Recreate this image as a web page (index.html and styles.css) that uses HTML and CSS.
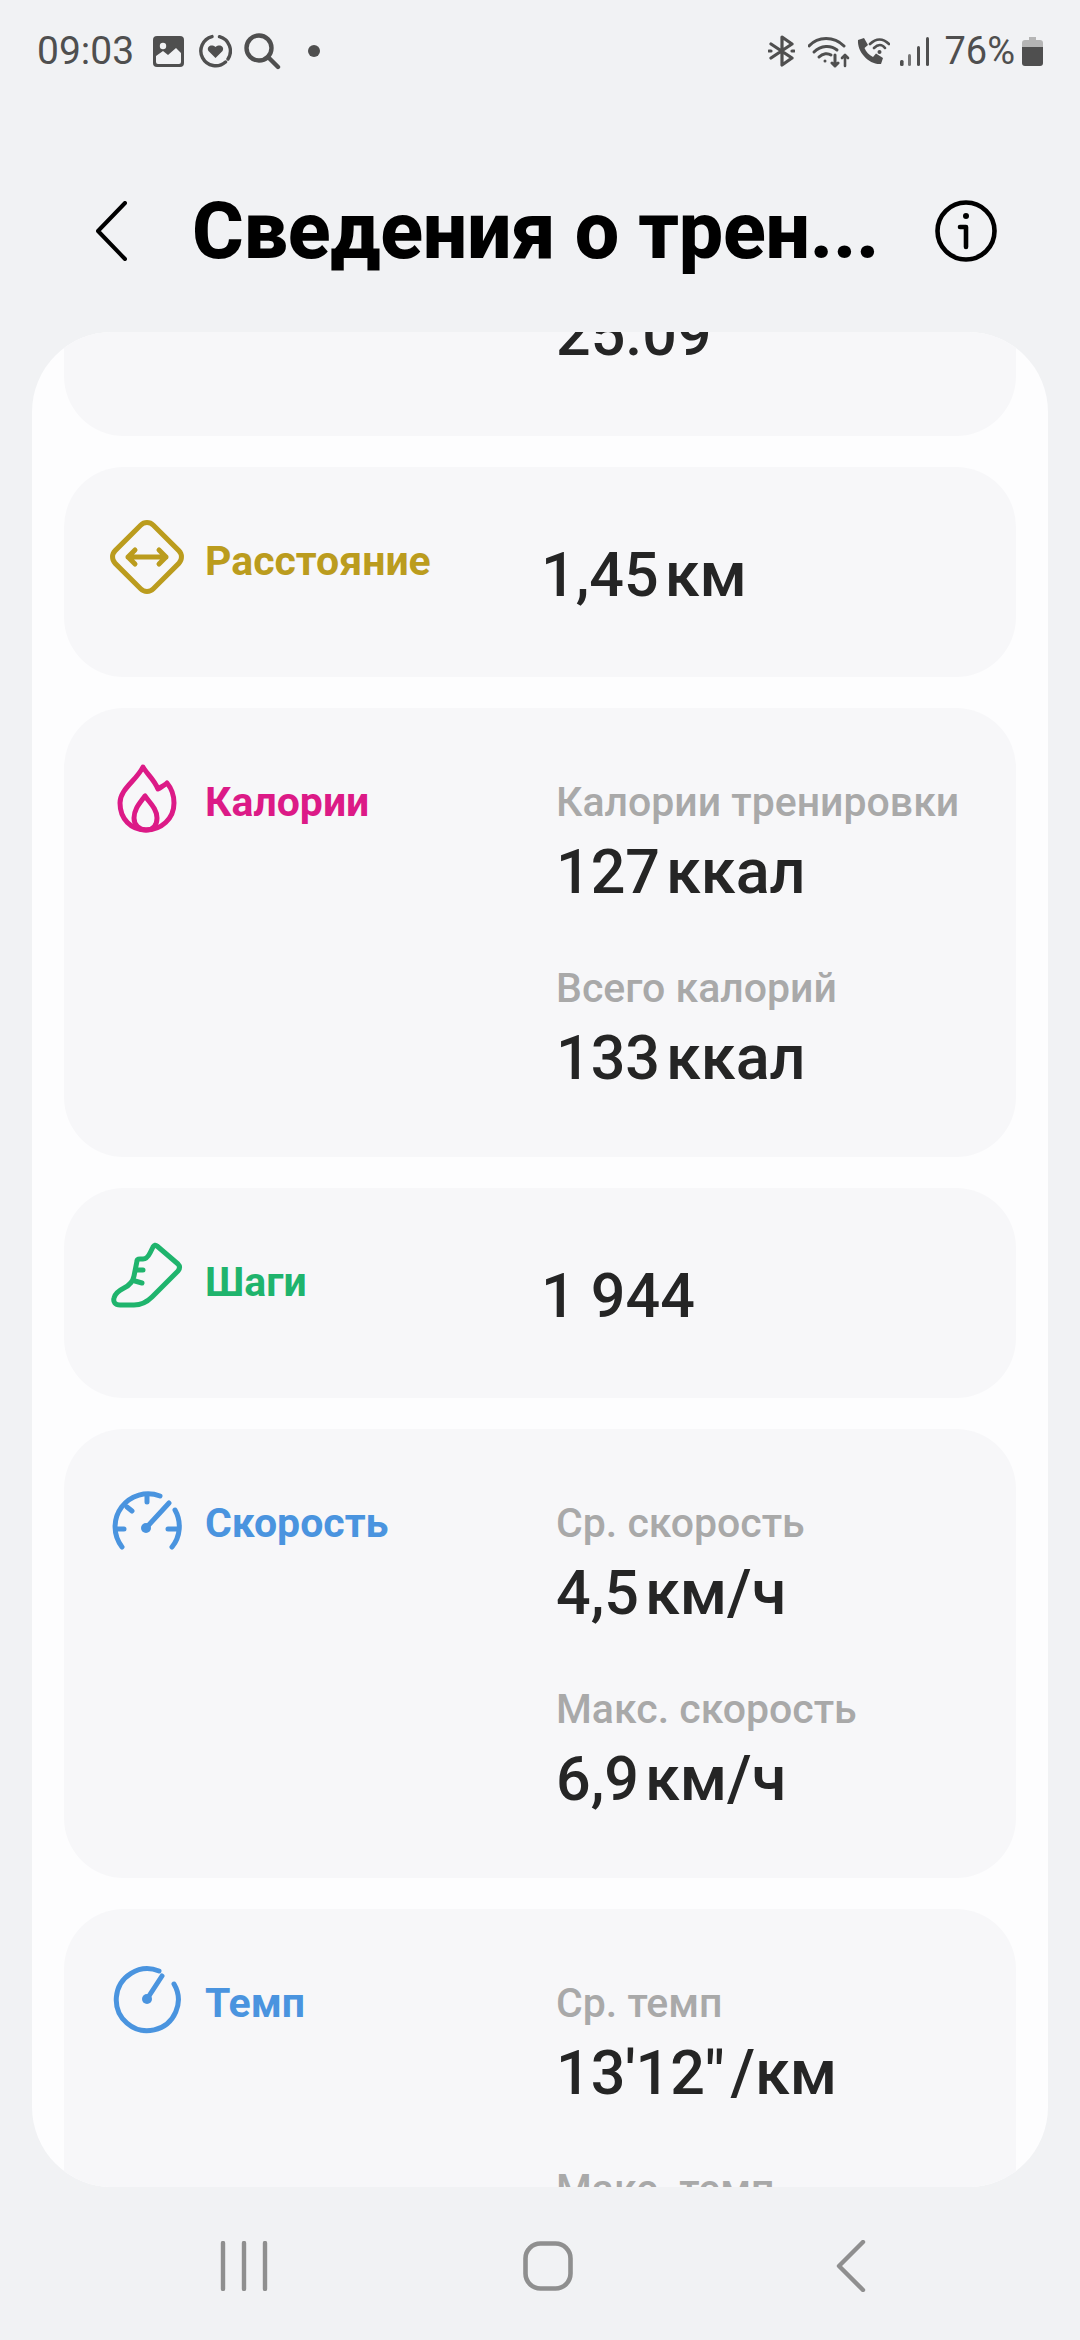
FILE: index.html
```html
<!DOCTYPE html>
<html lang="ru">
<head>
    <meta charset="UTF-8">
    <meta name="viewport" content="width=device-width, initial-scale=1.0">
    <title>Сведения о тренировке</title>
    <link rel="stylesheet" href="styles.css">
</head>
<body>
    <!-- Status bar -->
    <div class="status-bar">
        <div class="status-group">
            <span class="status-time">09:03</span>
            <svg class="status-image" width="31" height="31" viewBox="0 0 31 31">
                <rect width="31" height="31" rx="4" fill="#4f4f4f"/>
                <circle cx="10" cy="10" r="3.2" fill="#f1f2f4"/>
                <path d="M3 26 V20 L10 15 L15 19 L23 12 L28 17 V26 Q28 28 26 28 H5 Q3 28 3 26 Z" fill="#f1f2f4"/>
            </svg>
            <svg class="status-ring" width="33" height="34" viewBox="0 0 33 34" fill="none">
                <path d="M13 2.6 A14.8 14.8 0 1 0 26.5 28 M29 25 A14.8 14.8 0 0 0 20.5 2.7" stroke="#4f4f4f" stroke-width="3.4" stroke-linecap="round"/>
                <path d="M16.5 24 L9.5 17 C7 13 12 9.5 16.5 13 C21 9.5 26 13 23.5 17 Z" fill="#4f4f4f"/>
            </svg>
            <svg class="status-search" width="37" height="37" viewBox="0 0 37 37" fill="none" stroke="#4f4f4f" stroke-width="4.4" stroke-linecap="round">
                <circle cx="15" cy="15" r="12.5"/>
                <path d="M24 24 L34 34"/>
            </svg>
            <span class="status-dot"></span>
        </div>
        <div class="status-group">
            <svg class="status-bt" width="27" height="32" viewBox="0 0 27 32" fill="none" stroke="#4f4f4f" stroke-width="3.2" stroke-linecap="round" stroke-linejoin="round">
                <path d="M3 9 L24 23 L14 30 V2 L24 9 L3 23"/>
                <path d="M1 16 H3 M24 16 H26"/>
            </svg>
            <svg class="status-wifi" width="42" height="33" viewBox="0 0 42 33" fill="none" stroke="#4f4f4f" stroke-width="3" stroke-linecap="round" stroke-linejoin="round">
                <path d="M1 11 C10 1 26 1 36 11"/>
                <path d="M6 17 C13 10 23 10 29 15"/>
                <path d="M11 22 C15 18 20 18 23 20"/>
                <circle cx="17" cy="26" r="1.5" fill="#4f4f4f" stroke="none"/>
                <path d="M27 20 V31 M24 28 L27 31 L30 28"/>
                <path d="M37 31 V20 M34 23 L37 20 L40 23" stroke-width="2.6"/>
            </svg>
            <svg class="status-call" width="34" height="29" viewBox="0 0 34 29" fill="none">
                <path d="M2 3 L8 1 L12 8 L8.5 11 C10 15 13 18 17 20 L20 16.5 L27 21 L25 27 C13 28 1 15 2 3 Z" fill="#4f4f4f"/>
                <path d="M14 7 C20 1 27 1 33 7 M18 11 C22 7 26 7 29 11" stroke="#4f4f4f" stroke-width="2.6" stroke-linecap="round"/>
                <circle cx="23.5" cy="15" r="2" fill="#4f4f4f"/>
            </svg>
            <svg class="status-signal" width="29" height="29" viewBox="0 0 29 29" fill="#4f4f4f">
                <rect x="0" y="23" width="3.6" height="6" rx="1.5"/>
                <rect x="8" y="17" width="3" height="12" rx="1.5" fill="#777"/>
                <rect x="17" y="9" width="3" height="20" rx="1.5"/>
                <rect x="26" y="0" width="3" height="29" rx="1.5"/>
            </svg>
            <span class="status-battery-text">76%</span>
            <svg class="status-battery" width="21" height="29" viewBox="0 0 21 29">
                <path d="M7 0 H14 V3 H18 Q21 3 21 6 V10 H0 V6 Q0 3 3 3 H7 Z" fill="#b5b5b5"/>
                <path d="M0 10 H21 V26 Q21 29 18 29 H3 Q0 29 0 26 Z" fill="#4f4f4f"/>
            </svg>
        </div>
    </div>

    <!-- Title row -->
    <div class="app-header">
        <svg class="header-back" width="31" height="60" viewBox="0 0 31 60" fill="none" stroke="#000" stroke-width="4" stroke-linecap="round" stroke-linejoin="round">
            <path d="M29 2 L2 30 L29 58"/>
        </svg>
        <h1 class="header-title">Сведения о трен...</h1>
        <svg class="header-info" width="62" height="62" viewBox="0 0 62 62" fill="none" stroke="#000" stroke-width="4.6" stroke-linecap="round" stroke-linejoin="round">
            <circle cx="31" cy="31" r="28.5"/>
            <path d="M25 27 H31 V47"/>
            <circle cx="31" cy="16" r="3" fill="#000" stroke="none"/>
        </svg>
    </div>

    <!-- Scrolled details list -->
    <div class="details-panel">
        <div class="card card-partial">
            <div class="card-body">
                <div class="metric-value">25.09</div>
            </div>
        </div>

        <div class="card">
            <div class="card-head">
                <div class="card-icon">
                    <svg width="74" height="74" viewBox="0 0 74 74" fill="none" stroke="#bb9c1e" stroke-width="5" stroke-linecap="round" stroke-linejoin="round">
                        <rect x="10" y="10" width="54" height="54" rx="9" transform="rotate(45 37 37)"/>
                        <path d="M18 37 H56 M25 30 L18 37 L25 44 M49 30 L56 37 L49 44"/>
                    </svg>
                </div>
                <div class="card-label label-gold">Расстояние</div>
            </div>
            <div class="card-body single">
                <div class="metric-value">1,45<span class="unit">км</span></div>
            </div>
        </div>

        <div class="card">
            <div class="card-head">
                <div class="card-icon">
                    <svg width="74" height="74" viewBox="0 0 74 74" fill="none" stroke="#dc1a87" stroke-width="5" stroke-linecap="round" stroke-linejoin="round">
                        <path d="M33 6 C36 12 44 18 48 28 C51 26 55 24 57 22 C62 28 64 34 64 42 C64 58 51 69 36 69 C21 69 10 58 10 42 C10 28 26 20 33 6 Z"/>
                        <path d="M35 35 C30 42 24 48 24 57 C24 64 29 69 36 69 C43 69 47 64 47 57 C47 48 40 42 35 35 Z"/>
                    </svg>
                </div>
                <div class="card-label label-pink">Калории</div>
            </div>
            <div class="card-body">
                <div class="metric">
                    <div class="metric-title">Калории тренировки</div>
                    <div class="metric-value">127<span class="unit">ккал</span></div>
                </div>
                <div class="metric">
                    <div class="metric-title">Всего калорий</div>
                    <div class="metric-value">133<span class="unit">ккал</span></div>
                </div>
            </div>
        </div>

        <div class="card">
            <div class="card-head">
                <div class="card-icon">
                    <svg width="74" height="74" viewBox="0 0 74 74" fill="none" stroke="#1fb46d" stroke-width="5" stroke-linecap="round" stroke-linejoin="round">
                        <path d="M47 5 L68 23 Q71 26 68 30 L42 56 C37 61 32 64 24 64 H10 C5 64 3 61 4 57 C5 52 10 49 14 47 C20 44 23 41 24 35 L27 20 Q27 18 30 18 H33 C36 18 38 16 40 12 L43 6 Q45 3 47 5 Z"/>
                        <path d="M27 29 H33 M25 40 L32 42"/>
                    </svg>
                </div>
                <div class="card-label label-green">Шаги</div>
            </div>
            <div class="card-body single">
                <div class="metric-value">1 944</div>
            </div>
        </div>

        <div class="card">
            <div class="card-head">
                <div class="card-icon">
                    <svg width="74" height="74" viewBox="0 0 74 74" fill="none" stroke="#4a94df" stroke-width="5" stroke-linecap="round" stroke-linejoin="round">
                        <path d="M12 65 A33 33 0 0 1 50 14 M65 28 A33 33 0 0 1 62 65"/>
                        <path d="M6 47 H14 M17 25 L22 29 M37 13 V20 M58 47 H67"/>
                        <path d="M36 46 L59 21"/>
                        <circle cx="36" cy="46" r="5" fill="#4a94df" stroke="none"/>
                    </svg>
                </div>
                <div class="card-label label-blue">Скорость</div>
            </div>
            <div class="card-body">
                <div class="metric">
                    <div class="metric-title">Ср. скорость</div>
                    <div class="metric-value">4,5<span class="unit">км/ч</span></div>
                </div>
                <div class="metric">
                    <div class="metric-title">Макс. скорость</div>
                    <div class="metric-value">6,9<span class="unit">км/ч</span></div>
                </div>
            </div>
        </div>

        <div class="card">
            <div class="card-head">
                <div class="card-icon">
                    <svg width="74" height="74" viewBox="0 0 74 74" fill="none" stroke="#4a94df" stroke-width="5" stroke-linecap="round" stroke-linejoin="round">
                        <path d="M49 9 A31 31 0 1 0 64 22"/>
                        <path d="M37 37 L52 14"/>
                        <circle cx="37" cy="37" r="5" fill="#4a94df" stroke="none"/>
                    </svg>
                </div>
                <div class="card-label label-blue">Темп</div>
            </div>
            <div class="card-body">
                <div class="metric">
                    <div class="metric-title">Ср. темп</div>
                    <div class="metric-value">13'12"<span class="unit">/км</span></div>
                </div>
                <div class="metric">
                    <div class="metric-title">Макс. темп</div>
                    <div class="metric-value">9'02"<span class="unit">/км</span></div>
                </div>
            </div>
        </div>
    </div>

    <!-- Navigation bar -->
    <div class="nav-bar">
        <svg width="50" height="50" viewBox="0 0 50 50" fill="none" stroke="#8f8f8f" stroke-width="4.4" stroke-linecap="round">
            <path d="M3 2 V48 M24 2 V48 M45 2 V48"/>
        </svg>
        <svg width="50" height="50" viewBox="0 0 50 50" fill="none" stroke="#8f8f8f" stroke-width="4.6">
            <rect x="2.5" y="2.5" width="45" height="45" rx="15"/>
        </svg>
        <svg width="30" height="52" viewBox="0 0 30 52" fill="none" stroke="#8f8f8f" stroke-width="4.4" stroke-linecap="round" stroke-linejoin="round">
            <path d="M27 2 L3 26 L27 50"/>
        </svg>
    </div>
</body>
</html>
```

FILE: styles.css
```css
/* General page */
body {
    font-family: Roboto, "Noto Sans", sans-serif;
    display: flex;
    flex-direction: column;
    width: 1080px;
    height: 2340px;
    margin: 0;
    overflow: hidden;
    background-color: #f1f2f4;
}

/* Status bar */
.status-bar {
    display: flex;
    justify-content: space-between;
    align-items: center;
    height: 102px;
    padding: 0 37px 0 37px;
    box-sizing: border-box;
    color: #4f4f4f;
    font-size: 38px;
}

.status-group {
    display: flex;
    align-items: center;
}

.status-time { font-size: 39px; }

.status-image { margin-left: 19px; }
.status-ring { margin-left: 15px; }
.status-search { margin-left: 12px; }

.status-dot {
    width: 12px;
    height: 12px;
    margin-left: 27px;
    border-radius: 50%;
    background-color: #4f4f4f;
}

.status-wifi { margin-left: 13px; }
.status-call { margin-left: 6px; }
.status-signal { margin-left: 10px; }
.status-battery-text { margin-left: 15px; }
.status-battery { margin-left: 7px; }

/* Title row */
.app-header {
    display: flex;
    align-items: center;
    height: 230px;
    padding: 28px 83px 0 96px;
    box-sizing: border-box;
}

.header-title {
    flex: 1;
    margin: 0 0 0 65px;
    color: #000;
    font-size: 79px;
    font-weight: 800;
    letter-spacing: -0.3px;
    line-height: 100px;
    white-space: nowrap;
}

/* White panel with the scrolled cards */
.details-panel {
    display: flex;
    flex-direction: column;
    gap: 31px;
    height: 1855px;
    margin: 0 32px;
    padding: 0 32px;
    overflow: hidden;
    border-radius: 80px;
    background-color: #fdfdfe;
}

.card {
    display: flex;
    flex-shrink: 0;
    border-radius: 60px;
    background-color: #f7f7f9;
}

/* The card that is scrolled away under the header */
.card-partial {
    margin-top: -100px;
    padding-top: 66px;
}

.card-partial .card-body {
    padding: 0 0 66px 492px;
}

.card-head {
    display: flex;
    flex-shrink: 0;
    width: 477px;
    height: 74px;
    margin-top: 53px;
    padding-left: 46px;
    box-sizing: border-box;
}

.card-icon {
    width: 74px;
    height: 74px;
}

.card-label {
    margin-left: 21px;
    padding-top: 4px;
    font-size: 41px;
    font-weight: 700;
    line-height: 74px;
    white-space: nowrap;
}

.label-gold { color: #bb9c1e; }
.label-pink { color: #dc1a87; }
.label-green { color: #1fb46d; }
.label-blue { color: #4a94df; }

/* Right column */
.card-body {
    display: flex;
    flex-direction: column;
    gap: 52px;
    padding: 66px 0 63px 15px;
}

.card-body.single {
    padding: 72px 0 66px 0;
}

.metric-title {
    color: #a9a9a9;
    font-size: 41px;
    font-weight: 500;
    line-height: 56px;
    margin-bottom: 6px;
    white-space: nowrap;
}

.metric-value {
    color: #252525;
    font-size: 61px;
    font-weight: 500;
    line-height: 72px;
    white-space: nowrap;
}

.unit {
    margin-left: 6px;
    font-size: 63px;
}

/* Navigation bar */
.nav-bar {
    display: grid;
    grid-template-columns: repeat(3, 303px);
    justify-content: center;
    justify-items: center;
    align-items: center;
    flex: 1;
    padding: 5px 0 0 15px;
}
```
